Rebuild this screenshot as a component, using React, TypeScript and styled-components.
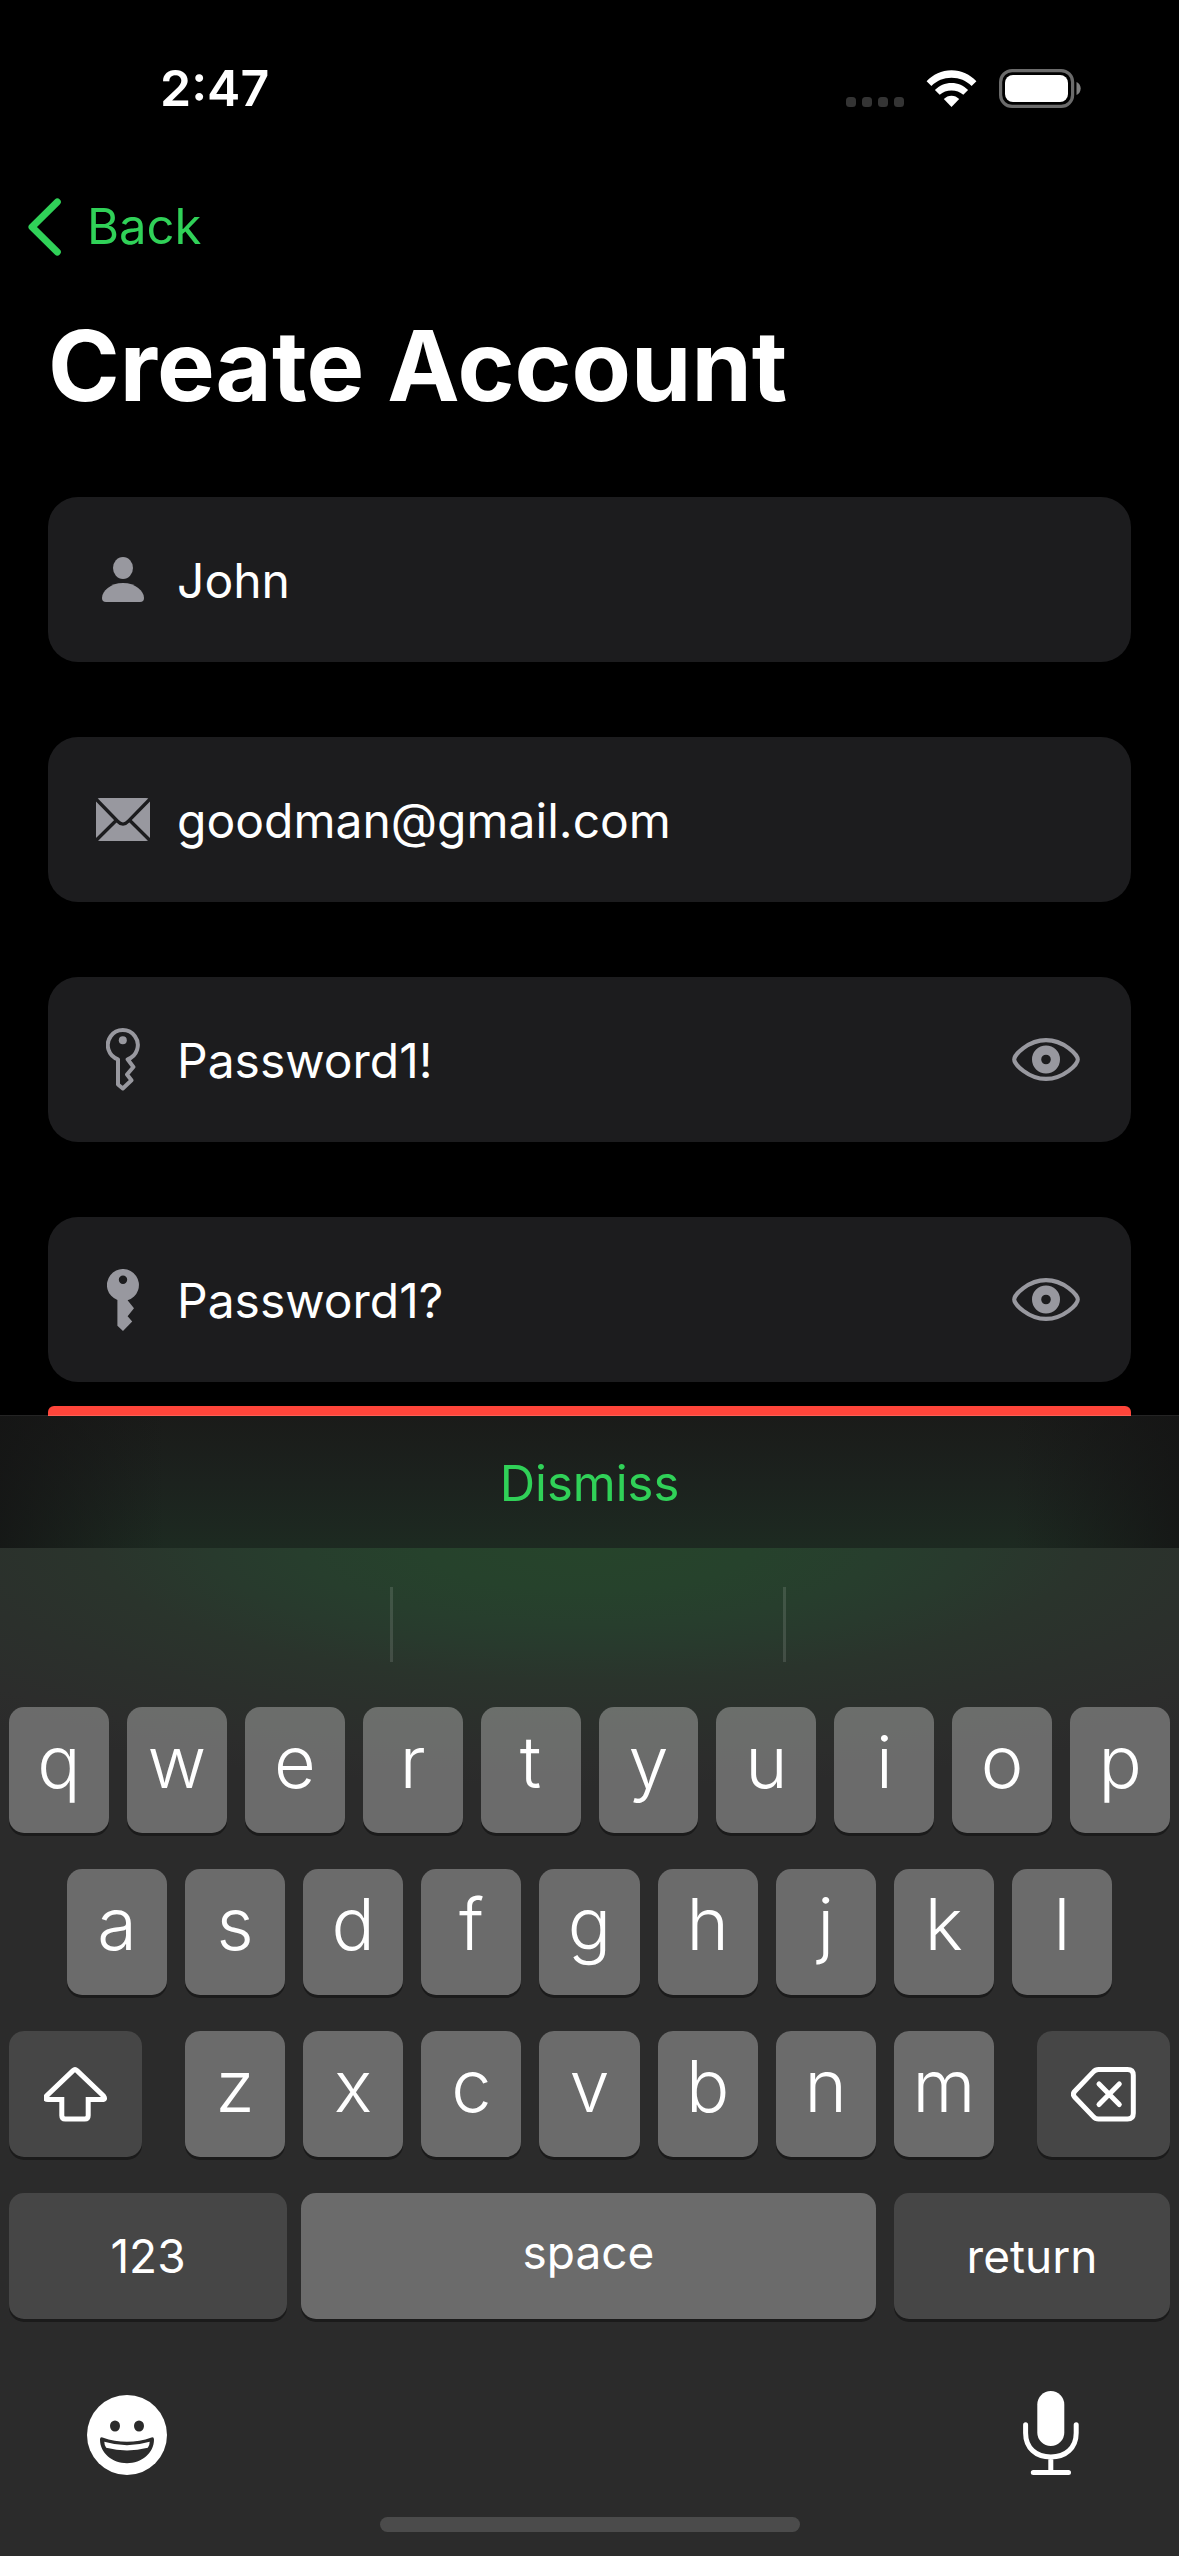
import React from "react";
import styled, { createGlobalStyle, css } from "styled-components";

const GlobalStyle = createGlobalStyle`
  *, *::before, *::after { box-sizing: border-box; }
  body {
    margin: 0;
    background: #000;
    color: #fff;
    font-family: Inter, "Liberation Sans", sans-serif;
    font-size: 49px;
    line-height: 60px;
  }
  button, input {
    font: inherit;
    color: inherit;
    border: 0;
    padding: 0;
    margin: 0;
    background: none;
  }
  svg { display: block; flex: none; }
`;

const Screen = styled.div`
  min-height: 100vh;
  display: flex;
  flex-direction: column;
`;

const StatusBar = styled.header`
  height: 176px;
  padding: 0 98px 0 160px;
  display: flex;
  align-items: center;
  justify-content: space-between;
`;

const Time = styled.time`
  font-size: 50px;
  font-weight: 600;
`;

const StatusIcons = styled.div`
  display: flex;
  align-items: center;
  gap: 22px;
`;

const NavBar = styled.nav`
  height: 102px;
  padding: 0 28px;
  display: flex;
  align-items: center;
`;

const BackButton = styled.button`
  display: flex;
  align-items: center;
  gap: 26px;
  color: #30d158;
`;

const Main = styled.main`
  flex: 1;
  padding: 28px 48px 0;
`;

const Title = styled.h1`
  margin: 0 0 71px;
  font-size: 97px;
  line-height: 120px;
  font-weight: 700;
`;

const Form = styled.form`
  display: flex;
  flex-direction: column;
  gap: 75px;
`;

const Field = styled.div`
  height: 165px;
  padding: 0 51px 0 48px;
  display: flex;
  align-items: center;
  gap: 27px;
  border-radius: 30px;
  background: #1c1c1e;
  color: #98989f;
`;

const FieldLabel = styled.label`
  width: 54px;
  display: flex;
  justify-content: center;
`;

const FieldInput = styled.input`
  flex: 1;
  min-width: 0;
  height: 100%;
  padding-top: 2px;
  color: #fff;
  font-size: 48px;
  outline: none;
`;

const ErrorStrip = styled.div`
  height: 10px;
  margin-top: 24px;
  border-radius: 6px 6px 0 0;
  background: #ff453a;
`;

const Toolbar = styled.div`
  height: 133px;
  margin-top: -1px;
  padding-top: 3px;
  border-top: 1px solid rgba(255, 255, 255, 0.14);
  display: flex;
  align-items: center;
  justify-content: center;
  background:
    linear-gradient(90deg, rgba(20, 20, 20, 0.8), rgba(20, 20, 20, 0) 14%, rgba(20, 20, 20, 0) 86%, rgba(20, 20, 20, 0.8)),
    linear-gradient(#1a1b19, #1c221e 50%, #1d2a21);
  background-clip: padding-box;
`;

const DismissButton = styled.button`
  color: #30d158;
`;

const Keyboard = styled.section`
  padding: 0 9px 24px;
  background:
    radial-gradient(
      ellipse 76% 240px at 50% 0,
      #26442b 0%,
      #26422c 18%,
      #273e2d 32%,
      #283a2d 42%,
      #2a342c 55%,
      #2b302c 71%,
      #2c2d2c 88%,
      #2b2b2b 100%
    )
    #2b2b2b;
`;

const Suggestions = styled.div`
  height: 159px;
  margin: 0 -9px;
  padding-bottom: 6px;
  display: grid;
  grid-template-columns: repeat(3, 1fr);
  align-items: center;
`;

const Suggestion = styled.span`
  height: 75px;

  &:not(:last-child) {
    border-right: 3px solid rgba(255, 255, 255, 0.12);
  }
`;

const Rows = styled.div`
  display: flex;
  flex-direction: column;
  gap: 36px;
`;

const KeyRow = styled.div<{ $inset?: number; $gap?: number }>`
  display: flex;
  gap: ${({ $gap = 18 }) => $gap}px;
  padding: 0 ${({ $inset = 0 }) => $inset}px;
`;

const LetterGroup = styled.div`
  flex: 1;
  display: flex;
  gap: 18px;
`;

const keyShape = css`
  height: 126px;
  display: flex;
  align-items: center;
  justify-content: center;
  border-radius: 15px;
  box-shadow: 0 3px 0 #1b1b1b;
`;

const LetterKey = styled.button`
  ${keyShape}
  flex: 1 1 0;
  min-width: 0;
  padding-bottom: 16px;
  background: rgba(255, 255, 255, 0.3);
  font-size: 72px;
  line-height: 88px;
  font-weight: 300;
`;

const SpaceKey = styled.button`
  ${keyShape}
  flex: 575 1 0;
  margin: 0 18px 0 14px;
  padding-bottom: 8px;
  background: rgba(255, 255, 255, 0.3);
  font-size: 46px;
`;

const ActionKey = styled.button<{ $grow?: number }>`
  ${keyShape}
  flex: ${({ $grow }) => ($grow ? `${$grow} 1 0` : "0 0 133px")};
  background: rgba(255, 255, 255, 0.13);
  font-size: 46px;
`;

const BottomBar = styled.div`
  margin-top: 72px;
  height: 84px;
  padding: 0 91px 0 78px;
  display: flex;
  align-items: flex-end;
  justify-content: space-between;
`;

const HomeIndicator = styled.div`
  width: 420px;
  height: 15px;
  margin: 42px auto 0;
  border-radius: 8px;
  background: #4b4b4b;
`;

const CellDots = () => (
  <svg width="58" height="37" viewBox="0 0 58 37" fill="#343434">
    {[0, 16, 32, 48].map((x) => (
      <rect key={x} x={x} y="27" width="10" height="10" rx="3.5" />
    ))}
  </svg>
);

const Wifi = () => (
  <svg width="51" height="37" viewBox="0 0 51 37" fill="#fff">
    <path d="M.6 11.3C7 4.5 15.5.3 25.5.3S44 4.5 50.4 11.3L45.6 16C40 10.5 33.5 7.7 25.5 7.7S11 10.5 5.4 16Z" />
    <path d="M8.9 20C13.5 15.4 19 13 25.5 13S37.5 15.4 42.1 20L37.3 24.8C34 21.8 30.2 20.4 25.5 20.4S17 21.8 13.7 24.8Z" />
    <path d="M17.8 29C20 26.9 22.5 25.7 25.5 25.7S31 26.9 33.2 29L25.5 37Z" />
  </svg>
);

const Battery = () => (
  <svg width="82" height="39" viewBox="0 0 82 39">
    <rect x="1.6" y="1.6" width="72" height="35.8" rx="11.5" fill="none" stroke="#6b6b6b" strokeWidth="3.2" />
    <rect x="6" y="6" width="63" height="27" rx="8" fill="#fff" />
    <path d="M77.5 13C80 14.2 81.7 16.6 81.7 19.5S80 24.8 77.5 26Z" fill="#808080" />
  </svg>
);

const Chevron = () => (
  <svg width="33" height="58" viewBox="0 0 33 58" fill="none" stroke="currentColor" strokeWidth="7" strokeLinecap="round" strokeLinejoin="round">
    <path d="M29.3 4 4 29 29.3 54" />
  </svg>
);

const PersonIcon = () => (
  <svg width="42" height="45" viewBox="0 0 42 45" fill="currentColor">
    <ellipse cx="21" cy="11" rx="10" ry="11" />
    <path d="M0 41C0 34 8.5 26 21 26S42 34 42 41Q42 45 38 45H4Q0 45 0 41Z" />
  </svg>
);

const MailIcon = () => (
  <svg width="54" height="43" viewBox="0 0 55 43" preserveAspectRatio="none">
    <rect width="55" height="43" rx="4" fill="currentColor" />
    <g fill="none" stroke="#1c1c1e" strokeWidth="3.4">
      <path d="M0 1 22 23.2Q27.5 29 33 23.2L55 1" />
      <path d="M0 42.5 20.5 22.5M55 42.5 34.5 22.5" />
    </g>
  </svg>
);

const KeyOutlineIcon = () => (
  <svg width="34" height="63" viewBox="0 0 34 63">
    <path
      d="M12 31.3A15 15 0 1 1 21.6 31.3L27.4 39 21 46.5 25.5 52.3 16.8 60.5 12 56.5Z"
      fill="none"
      stroke="currentColor"
      strokeWidth="4"
      strokeLinejoin="round"
    />
    <circle cx="16.8" cy="12.2" r="4" fill="currentColor" />
  </svg>
);

const KeySolidIcon = () => (
  <svg width="32" height="62" viewBox="0 0 32 62">
    <path
      fillRule="evenodd"
      fill="currentColor"
      d="M10.4 31A16 16 0 1 1 20.6 31.3L27 39.3 20.6 47.3 25.2 52.5 16 62 10.4 56.8ZM16 6.5A4.2 4.2 0 1 0 16 14.9A4.2 4.2 0 1 0 16 6.5Z"
    />
  </svg>
);

const EyeIcon = () => (
  <svg width="68" height="43" viewBox="0 0 68 43" fill="none" stroke="currentColor">
    <path d="M2.2 21.5C2.2 17 16 2.1 34 2.1S65.8 17 65.8 21.5 52 40.9 34 40.9 2.2 26 2.2 21.5Z" strokeWidth="4.1" />
    <circle cx="34" cy="21.5" r="9.4" strokeWidth="9.2" />
  </svg>
);

const ShiftIcon = () => (
  <svg width="64" height="55" viewBox="1 0 64 55" fill="none" stroke="#fff" strokeWidth="5">
    <path d="M34 3.6 60.5 29Q63.2 32.6 59 32.6H45.2V48.5Q45.2 52 41.7 52H22.3Q18.8 52 18.8 48.5V32.6H5Q.8 32.6 3.5 29L30 3.6Q32 1.8 34 3.6Z" />
  </svg>
);

const BackspaceIcon = () => (
  <svg width="65" height="55" viewBox="0 0 65 55" fill="none" stroke="#fff" strokeWidth="5" strokeLinecap="round">
    <path d="M27.5 2.5H56.5Q62.3 2.5 62.3 8.3V46.2Q62.3 52 56.5 52H27.5Q24.5 52 22.3 49.6L3.8 30.2Q1 27.2 3.8 24.2L22.3 4.9Q24.5 2.5 27.5 2.5Z" />
    <path d="M28 17 48.3 37.5M48.3 17 28 37.5" />
  </svg>
);

const EmojiIcon = () => (
  <svg width="80" height="80" viewBox="0 0 80 80">
    <circle cx="40" cy="40" r="40" fill="#fff" />
    <g fill="#2b2b2b">
      <ellipse cx="28" cy="31" rx="5" ry="5.6" />
      <ellipse cx="52" cy="31" rx="5" ry="5.6" />
      <path d="M15.5 42.4Q40 51 64.5 42.4 67 41.7 67 44.5C67 58 54.5 68.2 40 68.2S13 58 13 44.5Q13 41.7 15.5 42.4Z" />
    </g>
    <path d="M17.3 46.8Q40 53.6 62.7 46.8 62.7 50.5 60.8 52.8 40 58 19.2 52.8 17.3 50.5 17.3 46.8Z" fill="#fff" />
  </svg>
);

const MicIcon = () => (
  <svg width="56" height="84" viewBox="0 0 56 84" fill="none" stroke="#fff" strokeWidth="5" strokeLinecap="round">
    <rect x="14.3" y="0" width="27" height="55" rx="13.5" fill="#fff" stroke="none" />
    <path d="M2.6 33.8V42C2.6 57 13 66 27.8 66S53.2 57 53.2 42V33.8M27.8 66V81M10.3 81.4H45.5" />
  </svg>
);

type FieldSpec = {
  id: string;
  label: string;
  value: string;
  icon: React.ReactNode;
  reveal?: boolean;
};

const fields: FieldSpec[] = [
  { id: "name", label: "Name", value: "John", icon: <PersonIcon /> },
  { id: "email", label: "Email", value: "goodman@gmail.com", icon: <MailIcon /> },
  { id: "password", label: "Password", value: "Password1!", icon: <KeyOutlineIcon />, reveal: true },
  { id: "confirm", label: "Confirm password", value: "Password1?", icon: <KeySolidIcon />, reveal: true },
];

const letters = (row: string) =>
  row.split("").map((letter) => (
    <LetterKey key={letter} type="button">
      {letter}
    </LetterKey>
  ));

export default function App() {
  return (
    <Screen>
      <GlobalStyle />
      <StatusBar>
        <Time>2:47</Time>
        <StatusIcons>
          <CellDots />
          <Wifi />
          <Battery />
        </StatusIcons>
      </StatusBar>
      <NavBar>
        <BackButton type="button">
          <Chevron />
          Back
        </BackButton>
      </NavBar>
      <Main>
        <Title>Create Account</Title>
        <Form>
          {fields.map(({ id, label, value, icon, reveal }) => (
            <Field key={id}>
              <FieldLabel htmlFor={id} aria-label={label}>
                {icon}
              </FieldLabel>
              <FieldInput id={id} type="text" aria-label={label} defaultValue={value} spellCheck={false} />
              {reveal && (
                <button type="button" aria-label="Toggle password visibility">
                  <EyeIcon />
                </button>
              )}
            </Field>
          ))}
        </Form>
        <ErrorStrip />
      </Main>
      <Toolbar>
        <DismissButton type="button">Dismiss</DismissButton>
      </Toolbar>
      <Keyboard>
        <Suggestions>
          <Suggestion />
          <Suggestion />
          <Suggestion />
        </Suggestions>
        <Rows>
          <KeyRow>{letters("qwertyuiop")}</KeyRow>
          <KeyRow $inset={58}>{letters("asdfghjkl")}</KeyRow>
          <KeyRow $gap={43}>
            <ActionKey type="button" aria-label="Shift">
              <ShiftIcon />
            </ActionKey>
            <LetterGroup>{letters("zxcvbnm")}</LetterGroup>
            <ActionKey type="button" aria-label="Delete">
              <BackspaceIcon />
            </ActionKey>
          </KeyRow>
          <KeyRow $gap={0}>
            <ActionKey type="button" $grow={278}>
              123
            </ActionKey>
            <SpaceKey type="button">space</SpaceKey>
            <ActionKey type="button" $grow={276}>
              return
            </ActionKey>
          </KeyRow>
        </Rows>
        <BottomBar>
          <button type="button" aria-label="Emoji">
            <EmojiIcon />
          </button>
          <button type="button" aria-label="Dictate">
            <MicIcon />
          </button>
        </BottomBar>
        <HomeIndicator />
      </Keyboard>
    </Screen>
  );
}
